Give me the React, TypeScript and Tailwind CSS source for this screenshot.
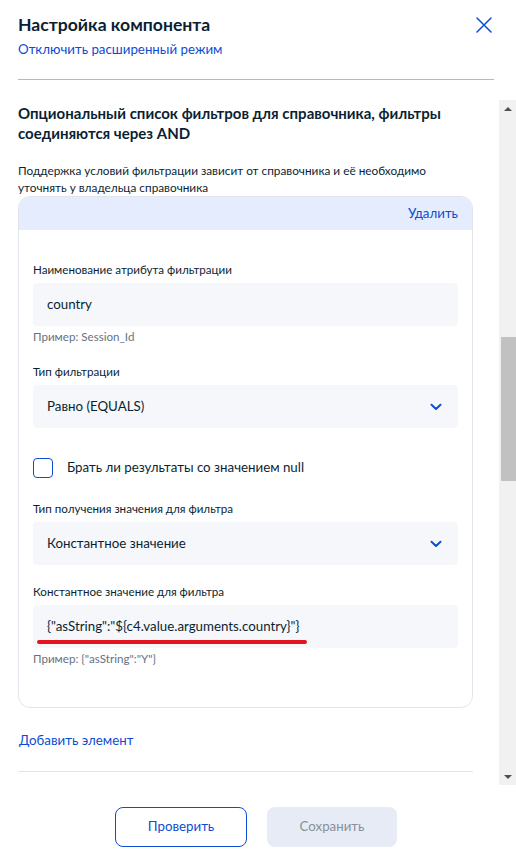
import React from 'react';

const BLUE = '#0d4cd3';

function Chevron() {
  return (
    <svg width="12" height="8" viewBox="0 0 12 8" fill="none">
      <path d="M1.5 1.8L6 6L10.5 1.8" stroke={BLUE} strokeWidth="2" strokeLinecap="round" strokeLinejoin="round" />
    </svg>
  );
}

function Field({ label, value, hint, select, mark }: { label: string; value: string; hint?: string; select?: boolean; mark?: boolean }) {
  return (
    <div>
      <div className="text-[11.6px] leading-4 text-[#0b1f33]">{label}</div>
      <div className="relative mt-[5px] flex h-[43px] items-center justify-between rounded bg-[#f5f7fa] pl-[14px] pr-[16px] text-[13.3px] text-[#0b1f33]">
        <span>{value}</span>
        {select && <Chevron />}
        {/* красная пометка поверх поля */}
        {mark && <div className="absolute left-[4px] top-[35px] h-[4px] w-[270px] rounded-full bg-[#e3141f]" />}
      </div>
      {hint && <div className="mt-[3px] text-[11.6px] leading-4 text-[#66727f]">{hint}</div>}
    </div>
  );
}

export default function App() {
  return (
    <div className="h-[862px] w-[516px] bg-white font-['Lato','Noto_Sans',sans-serif] text-[#0b1f33]">
      {/* шапка */}
      <div className="pl-[18px] pr-[22px] pt-3">
        <div className="flex items-center justify-between">
          <h1 className="text-[17.6px] font-bold leading-[26px]">Настройка компонента</h1>
          <svg className="mr-[2px]" width="16" height="16" viewBox="0 0 16 16" fill="none">
            <path d="M1 1L15 15M15 1L1 15" stroke={BLUE} strokeWidth="1.5" strokeLinecap="round" />
          </svg>
        </div>
        <div className="mt-[1px] text-[13.3px] leading-5 text-[#0d4cd3]">Отключить расширенный режим</div>
        <div className="mt-5 h-px bg-[#a9b8e8]" />
      </div>

      {/* прокручиваемая область */}
      <div className="mt-5 flex h-[685px]">
        <div className="flex-1 overflow-hidden pl-[18px] pr-[26px] pt-[3px]">
          <h2 className="text-[15px] font-bold leading-5">
            Опциональный список фильтров для справочника, фильтры соединяются через AND
          </h2>
          <p className="mt-[19px] max-w-[430px] text-[11.8px] leading-[17px]">
            Поддержка условий фильтрации зависит от справочника и её необходимо уточнять у владельца справочника
          </p>

          <div className="overflow-hidden rounded-xl border border-[#e1e5eb]">
            <div className="flex h-[33px] items-center justify-end bg-[#e4ecfd] pr-[14px] text-[13.3px] text-[#0d4cd3]">
              Удалить
            </div>
            <div className="px-[14px] pb-[40px] pt-[32px]">
              <Field label="Наименование атрибута фильтрации" value="country" hint="Пример: Session_Id" />
              <div className="mt-[19px]">
                <Field label="Тип фильтрации" value="Равно (EQUALS)" select />
              </div>
              <div className="mt-[30px] flex items-center">
                <div className="h-5 w-5 rounded border-[1.5px] border-[#0d4cd3]" />
                <span className="ml-[14px] text-[13.3px]">Брать ли результаты со значением null</span>
              </div>
              <div className="mt-[23px]">
                <Field label="Тип получения значения для фильтра" value="Константное значение" select />
              </div>
              <div className="mt-[19px]">
                <Field
                  label="Константное значение для фильтра"
                  value={'{"asString":"${c4.value.arguments.country}"}'}
                  hint={'Пример: {"asString":"Y"}'}
                  mark
                />
              </div>
            </div>
          </div>

          <div className="ml-[1px] mt-[22px] text-[13.3px] leading-5 text-[#0d4cd3]">Добавить элемент</div>
          <div className="mt-[21px] h-px bg-[#e1e5eb]" />
        </div>

        {/* полоса прокрутки */}
        <div className="flex w-[17px] flex-col bg-[#f1f1f1]">
          <div className="flex h-[17px] items-center justify-center">
            <svg width="8" height="4" viewBox="0 0 8 4"><path d="M0 4L4 0L8 4Z" fill="#505050" /></svg>
          </div>
          <div className="ml-[2px] mt-[220px] h-[144px] w-[15px] bg-[#c1c1c1]" />
          <div className="flex-1" />
          <div className="flex h-[17px] items-center justify-center">
            <svg width="8" height="4" viewBox="0 0 8 4"><path d="M0 0L8 0L4 4Z" fill="#505050" /></svg>
          </div>
        </div>
      </div>

      {/* кнопки */}
      <div className="mt-[22px] flex justify-center gap-5 pr-1">
        <button className="h-10 w-[132px] rounded-lg border border-[#0d4cd3] text-[13.3px] text-[#0d4cd3]">Проверить</button>
        <button className="h-10 w-[130px] rounded-lg bg-[#e6ebf5] text-[13.3px] text-[#86909c]">Сохранить</button>
      </div>
    </div>
  );
}
